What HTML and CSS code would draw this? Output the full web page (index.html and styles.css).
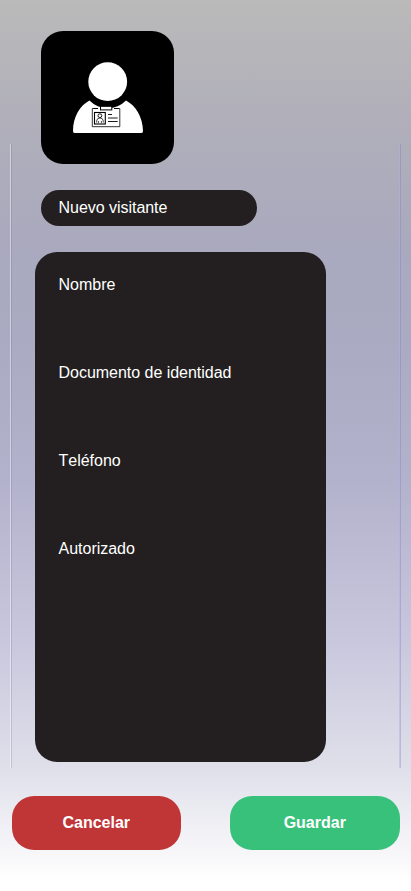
FILE: index.html
```html
<!DOCTYPE html>
<html lang="es">
<head>
<meta charset="utf-8">
<meta name="viewport" content="width=device-width, initial-scale=1">
<title>Nuevo visitante</title>
<link rel="stylesheet" href="styles.css">
</head>
<body>
<main class="screen">
  <div class="rails"></div>
  <div class="avatar">
    <svg viewBox="41 31 133 133" aria-hidden="true">
      <path fill="#fff" d="M89.500 100.600C80 105.500 73 117 73 131Q73 133 74.500 133H141.500Q143 133 143 131C142.800 117 135.500 105.500 126 100.600A25.500 25.500 0 0 1 89.500 100.600Z"/>
      <circle cx="107.700" cy="81.700" r="19.400" fill="#fff"/>
      <g fill="none" stroke="#000">
        <path stroke-width=".8" d="M98 108.500H92.300V126.700H119.800V108.500H114"/>
        <path stroke-width="1.200" d="M93.500 108.500H98M114 108.500H118.500"/>
        <rect x="100.500" y="106.300" width="11.300" height="3.600" fill="#fff" stroke-width="1"/>
        <rect x="94.500" y="112.500" width="10.800" height="11.500" stroke-width="1.100"/>
        <circle cx="99.900" cy="115.700" r="1.900" stroke-width=".9"/>
        <path d="M96.600 122.500V121Q96.800 118 99.900 118T103.300 121V122.500M98.400 121V123M101.400 121V123" stroke-width=".7"/>
        <path d="M108 114.500H112M108 118H117.700M108 121.500H117.700" stroke-width=".9"/>
      </g>
    </svg>
  </div>
  <h1 class="title">Nuevo visitante</h1>
  <section class="card">
    <div class="field">Nombre</div>
    <div class="field">Documento de identidad</div>
    <div class="field">Teléfono</div>
    <div class="field">Autorizado</div>
  </section>
  <footer class="actions">
    <button class="button cancel" type="button">Cancelar</button>
    <button class="button save" type="button">Guardar</button>
  </footer>
</main>
</body>
</html>
```

FILE: styles.css
```css
* { box-sizing: border-box; }

body {
  margin: 0;
  font-family: "Liberation Sans", Arial, sans-serif;
  font-size: 16px;
  font-kerning: none;
  color: #fff;
}

.screen {
  position: relative;
  display: flex;
  flex-direction: column;
  align-items: flex-start;
  height: 891px;
  padding: 31px 11.500px 0 11.500px;
  background: linear-gradient(#bababa 0%, #afaeba 15%, #a9a9bf 29%, #aaaac2 38%, #b3b2cc 54%, #c9c7dd 72%, #dfdfea 86%, #fff 99%);
}

/* Thin vertical rules framing the form */
.rails {
  position: absolute;
  top: 144px;
  left: 10px;
  right: 10px;
  height: 624px;
  border-left: 1px solid rgba(255, 255, 255, .45);
  border-right: 1px solid rgba(125, 120, 190, .35);
  box-shadow: inset 1px 0 rgba(110, 105, 150, .25), inset -1px 0 rgba(180, 175, 225, .5);
}

.avatar {
  width: 133px;
  height: 133px;
  margin-left: 29.500px;
  border-radius: 22px;
  background: #000;
}

.avatar svg {
  display: block;
  width: 100%;
  height: 100%;
}

.title {
  width: 216px;
  height: 36px;
  margin: 26px 0 0 29.500px;
  padding-left: 17.600px;
  border-radius: 18px;
  background: #231f20;
  font-size: 16px;
  font-weight: 400;
  line-height: 36px;
  letter-spacing: -.04px;
}

.card {
  width: 291.400px;
  height: 510.500px;
  margin: 25.800px 0 0 23.500px;
  padding: 24.200px 0 0 23.600px;
  border-radius: 22px;
  background: #231f20;
  letter-spacing: -.03px;
}

.field {
  height: 88px;
  line-height: 18px;
}

.actions {
  display: flex;
  justify-content: space-between;
  width: 100%;
  margin-top: 33.700px;
}

.button {
  width: 169.500px;
  height: 54px;
  padding: 0;
  border: 0;
  border-radius: 22px;
  color: #fff;
  font: 700 16px "Liberation Sans", Arial, sans-serif;
}

.cancel { background: #c03536; }
.save { background: #38c17b; }
```
